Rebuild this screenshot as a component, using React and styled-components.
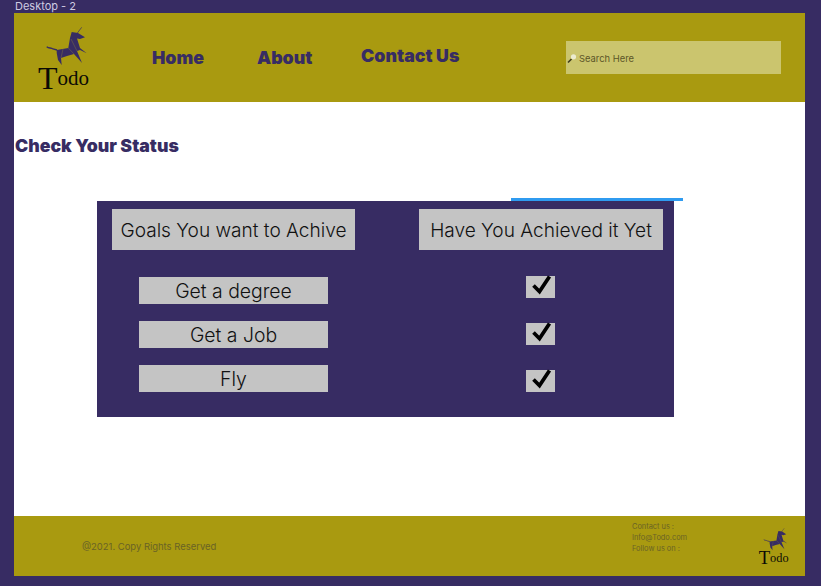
import React from "react";
import styled, { createGlobalStyle } from "styled-components";

const Global = createGlobalStyle`
  html, body { margin: 0; padding: 0; background: #372c63; overflow: hidden; }
  * { box-sizing: border-box; }
  body { font-family: Inter, "Liberation Sans", sans-serif; }
`;
const Page = styled.div`
  width: 821px;
  height: 586px;
  background: #372c63;
  padding: 0 16px 0 14px;
  display: flex;
  flex-direction: column;
`;
const FrameLabel = styled.div`
  height: 13px;
  padding-left: 1px;
  font-size: 11px;
  line-height: 12px;
  color: #cfcbe2;
`;
const Header = styled.header`
  height: 89px;
  background: #a99a10;
  display: flex;
  align-items: center;
  padding: 0 24px 0 16px;
`;
const Nav = styled.nav`
  margin-left: 52px;
  display: grid;
  grid-template-columns: 105px 104px auto;
  align-items: center;
`;
const NavLink = styled.a`
  font-size: 17.8px;
  font-weight: 900;
  color: #372c63;
  transform: translateY(${(p) => p.$raise || 0}px);
`;
const Search = styled.div`
  margin-left: auto;
  width: 215px;
  height: 33px;
  background: #cbc56e;
  display: flex;
  align-items: center;
  gap: 1px;
  padding: 2px 0 0 1px;
  font-size: 9.4px;
  color: #5c5628;
`;
const Main = styled.main`
  height: 414px;
  background: #fff;
  padding-top: 32px;
`;
const Title = styled.h1`
  margin: 0 0 44px 1px;
  height: 23px;
  font-size: 17.7px;
  line-height: 23px;
  font-weight: 900;
  color: #372c63;
`;
const Panel = styled.section`
  position: relative;
  margin-left: 83px;
  width: 577px;
  height: 216px;
  background: #372c63;
  padding: 8px 0 0 15px;
`;
const SelectionLine = styled.div`
  position: absolute;
  left: 414px;
  top: -3px;
  width: 172px;
  height: 2.5px;
  background: #2f9bf0;
`;
const HeadRow = styled.div`
  display: grid;
  grid-template-columns: 243px 244px;
  column-gap: 64px;
  margin-bottom: 27px;
`;
const Cell = styled.div`
  background: #c4c4c4;
  color: #111;
  font-weight: 300;
  display: flex;
  align-items: center;
  justify-content: center;
  white-space: nowrap;
`;
const HeadCell = styled(Cell)`
  height: 41px;
  padding-top: 1px;
  font-size: 19.1px;
`;
const Row = styled.div`
  display: grid;
  grid-template-columns: 189px 29px;
  column-gap: 198px;
  align-items: start;
  margin: 0 0 17px 27px;
`;
const GoalCell = styled(Cell)`
  height: 27px;
  font-size: 19.4px;
`;
const CheckBox = styled.div`
  width: 29px;
  height: 22px;
  background: #c4c4c4;
  margin-top: ${(p) => p.$top}px;
  svg { display: block; overflow: visible; }
`;
const Footer = styled.footer`
  height: 60px;
  background: #a99a10;
  display: flex;
  align-items: center;
  padding-left: 68px;
  color: #6a6326;
`;
const Copy = styled.div`
  width: 550px;
  font-size: 9.45px;
`;
const Contact = styled.div`
  width: 122px;
  font-size: 7.4px;
  line-height: 10.5px;
  margin-top: -15px;
`;
const FootLine = styled.div`
  margin-top: ${(p) => p.$top || 0}px;
`;
const LogoSvg = styled.svg`
  display: block;
  flex: none;
  overflow: visible;
`;

const Logo = ({ width }) => (
  <LogoSvg width={width} height={(width * 75) / 70} viewBox="0 0 70 75">
    <path d="M51.7 7.3 L47 13.5" stroke="#372c63" strokeWidth="0.7" />
    <path d="M16.7 26.7 C19 28.5 21 27.5 23 29 L27 30" stroke="#372c63" strokeWidth="1.3" fill="none" />
    <polygon
      points="41.7,12 48,13 55,17.3 50,19 47,18.5 50,28 56.7,33.3 50,30 47,31 52,43 44,34 37,36 31,38 31.7,45 28,40 26.7,33 26.7,30 38.3,28 40,18"
      fill="#372c63"
    />
    <path d="M38.3 28 L44 34 M41 19 L47 31 M33 29 L31 38" stroke="#7a7040" strokeWidth="0.5" fill="none" />
    <text fontFamily="'Liberation Serif', serif" fill="#0b0a05">
      <tspan x="8" y="69" fontSize="32">T</tspan>
      <tspan x="27.5" y="65" fontSize="21">odo</tspan>
    </text>
  </LogoSvg>
);

const Check = () => (
  <svg width="29" height="22" viewBox="0 0 29 22">
    <path d="M7.5 9.5 L13.5 15.5 L23.5 0.5" fill="none" stroke="#000" strokeWidth="3.7" />
  </svg>
);

const SearchIcon = () => (
  <svg width="11" height="11" viewBox="0 0 11 11">
    <path d="M1 9.5 L4.5 6" stroke="#3d3a1c" strokeWidth="1.6" />
    <circle cx="6.5" cy="3.8" r="2.6" fill="#ecebcf" />
  </svg>
);

const rows = [
  { goal: "Get a degree", top: -1 },
  { goal: "Get a Job", top: 2 },
  { goal: "Fly", top: 5 },
];

export default function App() {
  return (
    <Page>
      <Global />
      <FrameLabel>Desktop - 2</FrameLabel>
      <Header>
        <Logo width={70} />
        <Nav>
          <NavLink>Home</NavLink>
          <NavLink>About</NavLink>
          <NavLink $raise={-2}>Contact Us</NavLink>
        </Nav>
        <Search>
          <SearchIcon />
          Search Here
        </Search>
      </Header>
      <Main>
        <Title>Check Your Status</Title>
        <Panel>
          <SelectionLine />
          <HeadRow>
            <HeadCell>Goals You want to Achive</HeadCell>
            <HeadCell>Have You Achieved it Yet</HeadCell>
          </HeadRow>
          {rows.map((r) => (
            <Row key={r.goal}>
              <GoalCell>{r.goal}</GoalCell>
              <CheckBox $top={r.top}>
                <Check />
              </CheckBox>
            </Row>
          ))}
        </Panel>
      </Main>
      <Footer>
        <Copy>@2021. Copy Rights Reserved</Copy>
        <Contact>
          <FootLine>Contact us :</FootLine>
          <FootLine>Info@Todo.com</FootLine>
          <FootLine $top={1}>Follow us on :</FootLine>
        </Contact>
        <Logo width={41} />
      </Footer>
    </Page>
  );
}
